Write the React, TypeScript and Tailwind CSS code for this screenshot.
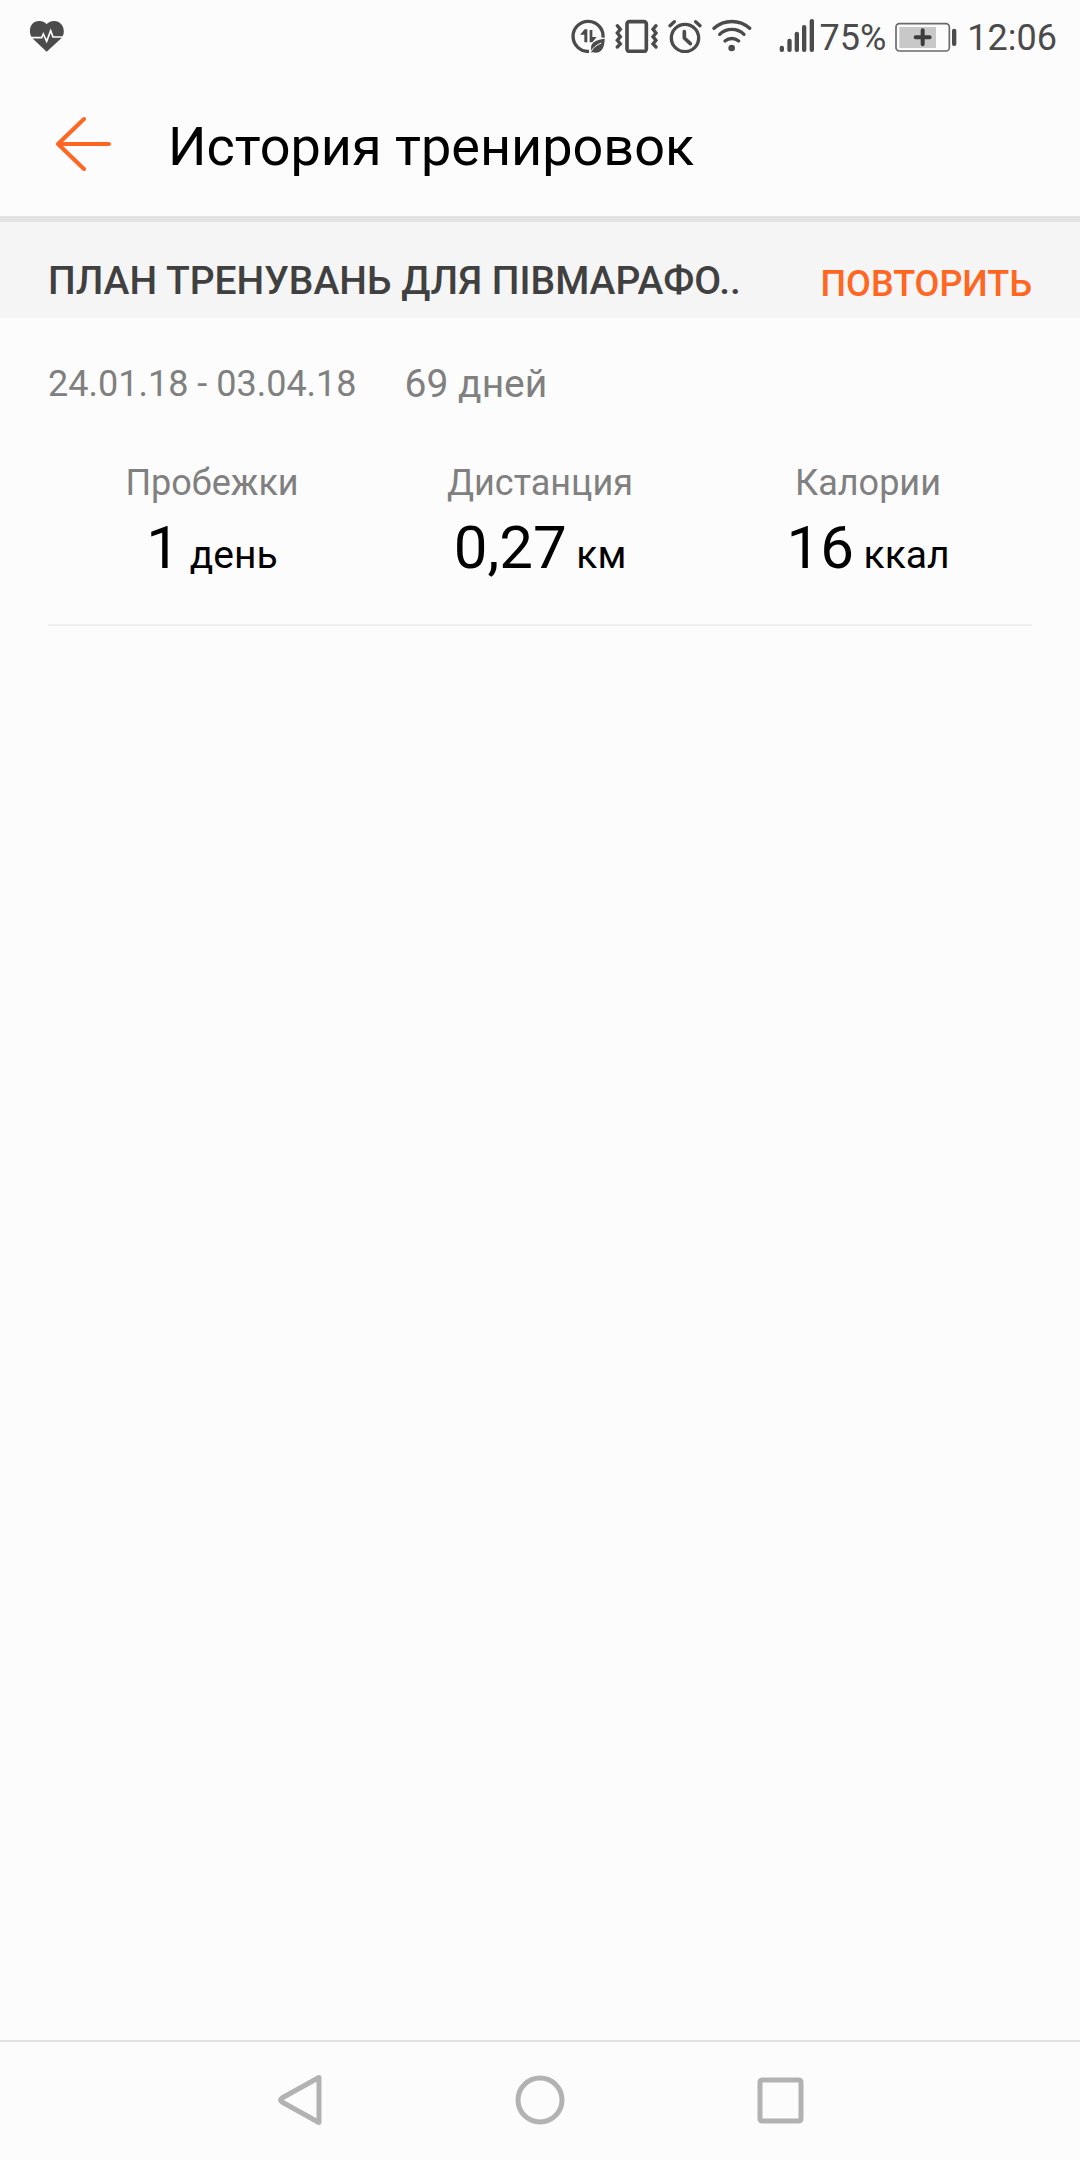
interface IStat {
  label: string;
  value: string;
  unit: string;
}

const stats: IStat[] = [
  { label: "Пробежки", value: "1", unit: "день" },
  { label: "Дистанция", value: "0,27", unit: "км" },
  { label: "Калории", value: "16", unit: "ккал" },
];

const HeartIcon = () => (
  <svg className="w-9 h-[34px]" viewBox="0 0 108 102" aria-hidden="true">
    <path
      d="M53 98L10 58C-4 40 2 6 31 6C41 6 49 10 53 16C57 10 65 6 75 6C104 6 112 40 97 58Z"
      fill="#4b4b4b"
    />
    <path d="M2 56H38L43 45L53 67L65 35L72 54H106" fill="none" stroke="#fcfcfc" strokeWidth="5" />
  </svg>
);

const DataSaverIcon = () => (
  <svg className="w-[34px] h-[34px]" viewBox="0 0 102 102" aria-hidden="true">
    <path d="M96 56A45 45 0 1 0 54 97" fill="none" stroke="#4b4b4b" strokeWidth="10" />
    <path d="M49 70H40V47H27L41 31H49ZM56 33H64V54H77L64 70H56Z" fill="#4b4b4b" />
    <path
      d="M101 59C84 61 60 66 60 86C60 92 62 95 60 101C66 99 70 101 76 101C96 99 101 78 101 59Z"
      fill="#4b4b4b"
    />
    <path d="M60 98C66 86 76 78 91 72" fill="none" stroke="#fcfcfc" strokeWidth="3" />
  </svg>
);

const VibrateIcon = () => (
  <svg
    className="w-[43px] h-[34px]"
    viewBox="0 0 129 102"
    fill="none"
    stroke="#4b4b4b"
    strokeWidth="10"
    strokeLinecap="round"
    aria-hidden="true"
  >
    <rect x="36" y="8" width="58" height="89" rx="7" strokeWidth="11" />
    <path d="M7 20L16 31L7 42L16 53L7 64L16 75L7 84" />
    <path d="M123 20L114 31L123 42L114 53L123 64L114 75L123 84" />
  </svg>
);

const AlarmIcon = () => (
  <svg
    className="w-[34px] h-[34px]"
    viewBox="0 0 102 102"
    fill="none"
    stroke="#4b4b4b"
    strokeWidth="10"
    strokeLinecap="round"
    strokeLinejoin="round"
    aria-hidden="true"
  >
    <circle cx="51" cy="57" r="41" />
    <path d="M49 38V57L67 74" strokeWidth="11" />
    <path d="M6 20L19 8M83 8L96 20" />
  </svg>
);

const WifiIcon = () => (
  <svg
    className="w-10 h-[34px]"
    viewBox="0 0 120 102"
    fill="none"
    stroke="#4b4b4b"
    strokeWidth="10"
    strokeLinecap="round"
    aria-hidden="true"
  >
    <path d="M6 28A80 80 0 0 1 113 28" />
    <path d="M23 46A52 52 0 0 1 96 46" />
    <path d="M39 66A32 32 0 0 1 80 66" />
    <circle cx="59" cy="87" r="10" fill="#4b4b4b" stroke="none" />
  </svg>
);

const SignalIcon = () => (
  <svg className="w-[35px] h-[34px]" viewBox="0 0 105 102" fill="#4b4b4b" aria-hidden="true">
    <rect x="2" y="80" width="13" height="19" rx="6" />
    <rect x="25" y="59" width="13" height="40" rx="6" />
    <rect x="47" y="38" width="13" height="61" rx="6" />
    <rect x="69" y="18" width="13" height="81" rx="6" />
    <rect x="92" y="0" width="13" height="99" rx="6" />
  </svg>
);

const BatteryIcon = () => (
  <svg className="w-[62px] h-[34px]" viewBox="0 0 186 102" aria-hidden="true">
    <rect x="3" y="14" width="160" height="82" rx="10" fill="none" stroke="#6a6a6a" strokeWidth="5" />
    <rect x="13" y="24" width="110" height="63" fill="#c8c8c8" />
    <path d="M83 34V76M62 55H104" stroke="#3c3c3c" strokeWidth="12" strokeLinecap="round" />
    <rect x="171" y="29" width="13" height="52" rx="6" fill="#4b4b4b" />
  </svg>
);

export default function App() {
  return (
    <div
      className="min-h-screen flex flex-col bg-[#fcfcfc] text-black"
      style={{ fontFamily: 'Roboto, "Noto Sans", sans-serif' }}
    >
      {/* Status bar */}
      <div className="h-[72px] pl-[29px] pr-[23px] flex items-center justify-between text-4xl text-[#4b4b4b]">
        <HeartIcon />
        <div className="flex items-center">
          <div className="flex items-center gap-[10px] mr-[27px]">
            <DataSaverIcon />
            <VibrateIcon />
            <AlarmIcon />
            <WifiIcon />
          </div>
          <SignalIcon />
          <span className="pt-1 ml-[6px] mr-[9px]">75%</span>
          <BatteryIcon />
          <span className="pt-1 ml-[10px]">12:06</span>
        </div>
      </div>

      {/* Header */}
      <header className="h-[150px] px-14 flex items-center gap-14 border-b-6 border-[#e2e2e2]">
        <button type="button" aria-label="Назад">
          <svg
            className="w-14 h-14"
            viewBox="0 0 56 56"
            fill="none"
            stroke="#ff6622"
            strokeWidth="4"
            strokeLinecap="round"
            strokeLinejoin="round"
          >
            <path d="M28 3L2 28L28 53M2 28H53" />
          </svg>
        </button>
        <h1 className="pt-1.5 text-[54px] leading-[64px]">История тренировок</h1>
      </header>

      <main className="flex-1">
        <div className="h-24 px-12 pb-3 flex items-end justify-between bg-[#f5f5f5] font-medium">
          <h2 className="text-[39px] leading-[50px] text-[#404040]">ПЛАН ТРЕНУВАНЬ ДЛЯ ПІВМАРАФО..</h2>
          <button type="button" className="text-4xl leading-[44px] text-[#ff6622]">
            ПОВТОРИТЬ
          </button>
        </div>

        <section className="mx-12 pt-[42px] pb-10 border-b-2 border-[#f0f0f0]">
          <div className="flex items-center gap-12 leading-[48px] text-[#808080]">
            <span className="text-[36px]">24.01.18 - 03.04.18</span>
            <span className="text-[39px]">69 дней</span>
          </div>

          <dl className="mt-[51px] grid grid-cols-3 text-center">
            {stats.map((stat) => (
              <div key={stat.label}>
                <dt className="text-[36px] leading-[48px] text-[#808080]">{stat.label}</dt>
                <dd className="mt-[5px] text-[60px] leading-[72px]">
                  {stat.value}
                  <span className="text-[39px] leading-none"> {stat.unit}</span>
                </dd>
              </div>
            ))}
          </dl>
        </section>
      </main>

      {/* Navigation bar */}
      <nav className="h-[120px] pb-[2px] border-t-2 border-[#e2e2e2]">
        <div className="w-2/3 h-full mx-auto grid grid-cols-3 place-items-center">
          <button type="button" aria-label="Назад">
            <svg className="w-[50px] h-[50px]" viewBox="0 0 50 50" fill="none" stroke="#b2b2b2" strokeWidth="5" strokeLinejoin="round">
              <path d="M44 3V47Q44 48 43 47L7 27Q4 25 7 23L43 3Q44 2 44 3Z" />
            </svg>
          </button>
          <button type="button" aria-label="Домой">
            <svg className="w-[50px] h-[50px]" viewBox="0 0 50 50" fill="none" stroke="#b2b2b2" strokeWidth="5">
              <circle cx="25" cy="25" r="22" />
            </svg>
          </button>
          <button type="button" aria-label="Недавние">
            <svg className="w-[50px] h-[50px]" viewBox="0 0 50 50" fill="none" stroke="#b2b2b2" strokeWidth="5">
              <rect x="5" y="5" width="41" height="41" rx="2" />
            </svg>
          </button>
        </div>
      </nav>
    </div>
  );
}
